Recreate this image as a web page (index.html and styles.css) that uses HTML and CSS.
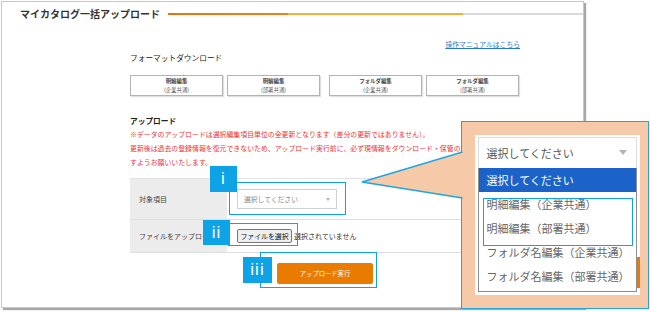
FILE: index.html
```html
<!DOCTYPE html>
<html lang="ja">
<head>
    <meta charset="UTF-8">
    <title>マイカタログ一括アップロード</title>
    <link rel="stylesheet" href="styles.css">
</head>
<body>

    <div class="window">
        <div class="page-head">
            <h1>マイカタログ一括アップロード</h1>
            <span class="head-line"></span>
        </div>

        <div class="content">
            <p class="manual"><a href="#">操作マニュアルはこちら</a></p>

            <h2>フォーマットダウンロード</h2>
            <div class="format-btns">
                <button class="fmt-btn"><b>明細編集</b><span>(企業共通)</span></button>
                <button class="fmt-btn"><b>明細編集</b><span>(部署共通)</span></button>
                <button class="fmt-btn fmt-folder"><b>フォルダ編集</b><span>(企業共通)</span></button>
                <button class="fmt-btn"><b>フォルダ編集</b><span>(部署共通)</span></button>
            </div>

            <h2 class="upload-title">アップロード</h2>
            <p class="notice">
                ※データのアップロードは選択編集項目単位の全更新となります（差分の更新ではありません）。<br>
                更新後は過去の登録情報を復元できないため、アップロード実行前に、必ず現情報をダウンロード・保管の上、アップロードを実施しま<br>
                すようお願いいたします。
            </p>

            <div class="upload-table">
                <div class="upload-row row-target">
                    <div class="row-label"><span>対象項目</span></div>
                    <div class="row-value">
                        <div class="select-box">選択してください<span class="caret"></span></div>
                    </div>
                </div>
                <div class="upload-row row-file">
                    <div class="row-label"><span class="label-clip">ファイルをアップロード</span></div>
                    <div class="row-value">
                        <button class="file-btn">ファイルを選択</button>
                        <span class="file-name">選択されていません</span>
                    </div>
                </div>
            </div>

            <div class="submit-row">
                <button class="btn-upload">アップロード実行</button>
            </div>
        </div>
    </div>

    <!-- annotations -->
    <div class="frame frame-1"></div>
    <div class="frame frame-2"></div>
    <div class="frame frame-3"></div>
    <div class="mark mark-1">i</div>
    <div class="mark mark-2">ii</div>
    <div class="mark mark-3">iii</div>

    <div class="callout">
        <div class="zoom-panel">
            <div class="zoom-select">選択してください<span class="zoom-caret"></span></div>
            <ul class="zoom-list">
                <li class="active">選択してください</li>
                <li>明細編集（企業共通）</li>
                <li>明細編集（部署共通）</li>
                <li>フォルダ名編集（企業共通）</li>
                <li>フォルダ名編集（部署共通）</li>
            </ul>
            <div class="frame frame-opts"></div>
            <span class="behind-btn"></span>
        </div>
    </div>

    <svg class="pointer" width="106" height="54" viewBox="0 0 106 54">
        <polygon points="2,34 104,4 104,50" fill="#f6caa8"/>
        <polyline points="102.5,4 2,34 102.5,50" fill="none" stroke="#1fa5e2" stroke-width="1.5"/>
    </svg>

</body>
</html>
```

FILE: styles.css
```css
:root {
    --blue-mark: #0ea2e6;
    --orange: #e87b00;
    --peach: #f6caa8;
    --red-text: #ec3535;
    --border-gray: #c8c8c8;
}

* { box-sizing: border-box; margin: 0; padding: 0; }

body {
    font-family: "Noto Sans CJK JP", "Noto Sans", sans-serif;
    color: #333;
    background: #fff;
    position: relative;
    width: 650px;
    height: 312px;
    overflow: hidden;
}

.window {
    margin: 1px 0 0 1px;
    width: 583px;
    height: 307px;
    border: 1px solid var(--border-gray);
    box-shadow: 2px 2px 1px #a8a8a8;
    background: #fff;
}

.page-head {
    display: flex;
    align-items: center;
    height: 24px;
    padding-left: 18px;
}

.page-head h1 {
    font-size: 10px;
    line-height: 12px;
    font-weight: 700;
    color: #333;
    white-space: nowrap;
}

.head-line {
    flex: 1;
    height: 2px;
    margin-left: 8px;
    background: linear-gradient(to right, #e8730c 0, #ec8418 29%, #f5ae3c 29%, #f5ae3c 71%, #dadada 71%);
}

.content {
    padding: 0 63px 0 128px;
}

.manual {
    margin-top: 13px;
    text-align: right;
    font-size: 6.8px;
    line-height: 10px;
}
.manual a {
    color: #2a78cc;
}

.content h2 {
    margin-top: 4px;
    font-size: 7.7px;
    line-height: 10px;
    font-weight: 400;
    color: #222;
}

.format-btns {
    display: flex;
    gap: 4px;
    margin-top: 12px;
}

.fmt-btn {
    width: 93px;
    height: 21px;
    display: flex;
    flex-direction: column;
    align-items: center;
    justify-content: center;
    background: #fff;
    border: 1px solid #b3b3b3;
    box-shadow: 1px 1px 1px rgba(0,0,0,0.12);
    font-family: inherit;
    font-size: 5.4px;
    line-height: 8.5px;
    color: #555;
}
.fmt-btn b { font-weight: 700; color: #444; }
.fmt-folder { margin-left: 5px; }

.content h2.upload-title {
    margin-top: 20px;
    font-weight: 700;
}

.notice {
    width: 333px;
    overflow: hidden;
    margin-top: 1px;
    font-size: 6.9px;
    line-height: 14px;
    color: var(--red-text);
    white-space: nowrap;
}

.upload-table {
    margin-top: 9px;
    border-top: 1px solid #e2e2e2;
}

.upload-row {
    display: grid;
    grid-template-columns: 97px 1fr;
    border-bottom: 1px solid #dedede;
}
.row-target { height: 41px; }
.row-file { height: 33px; }

.row-label {
    display: flex;
    align-items: center;
    padding-left: 9px;
    background: #ececec;
    font-size: 7px;
    color: #444;
    white-space: nowrap;
    overflow: hidden;
}
.label-clip {
    display: block;
    width: 64px;
    overflow: hidden;
}

.row-value {
    display: flex;
    align-items: center;
    padding-left: 10px;
    font-size: 7px;
}

.select-box {
    width: 100px;
    height: 20px;
    display: flex;
    align-items: center;
    justify-content: space-between;
    padding: 0 6px;
    border: 1px solid #cfcfcf;
    font-size: 6.8px;
    color: #888;
}
.caret {
    border-left: 2.5px solid transparent;
    border-right: 2.5px solid transparent;
    border-top: 3px solid #b0b0b0;
}

.file-btn {
    width: 55px;
    height: 14px;
    background: #efefef;
    border: 1px solid #767676;
    border-radius: 2px;
    font-family: inherit;
    font-size: 6.9px;
    color: #111;
}
.file-name {
    margin-left: 2px;
    color: #333;
}

.submit-row {
    display: flex;
    justify-content: center;
    margin-top: 10px;
}

.btn-upload {
    width: 96px;
    height: 21px;
    border: none;
    border-radius: 2px;
    background: var(--orange);
    color: #fff;
    font-family: inherit;
    font-size: 6.3px;
}

/* annotation overlays */
.frame {
    position: absolute;
    border: 1.5px solid var(--blue-mark);
}
.frame-1 { left: 229px; top: 182px; width: 117px; height: 33px; }
.frame-2 { left: 228px; top: 223px; width: 70px; height: 23px; }
.frame-3 { left: 260px; top: 252px; width: 117px; height: 36px; }

.mark {
    position: absolute;
    display: flex;
    align-items: center;
    justify-content: center;
    background: var(--blue-mark);
    color: #fff;
    font-family: "Liberation Sans", sans-serif;
    font-size: 17px;
    letter-spacing: 1px;
}
.mark-1 { left: 210px; top: 166px; width: 27px; height: 26px; }
.mark-2 { left: 203px; top: 220px; width: 27px; height: 25px; }
.mark-3 { left: 243px; top: 257px; width: 29px; height: 26px; }

.callout {
    position: absolute;
    left: 461px;
    top: 121px;
    width: 188px;
    height: 188px;
    border: 1.5px solid #1fa5e2;
    background: var(--peach);
}

.pointer {
    position: absolute;
    left: 360px;
    top: 148px;
}

.zoom-panel {
    position: absolute;
    left: 12.5px;
    top: 12.5px;
    width: 165px;
    height: 160px;
    background: #fff;
}

.zoom-select {
    height: 31px;
    margin: 2px 3px 0;
    display: flex;
    align-items: center;
    justify-content: space-between;
    padding: 0 9px 0 8px;
    border: 1px solid #dcdcdc;
    border-bottom: none;
    font-size: 11px;
    color: #555;
}
.zoom-caret {
    border-left: 4px solid transparent;
    border-right: 4px solid transparent;
    border-top: 5px solid #b3b3b3;
}

.zoom-list {
    list-style: none;
    margin: 0 3px;
    padding-bottom: 3px;
    border: 1px solid #8c8c8c;
    border-top: none;
}
.zoom-list li {
    height: 24px;
    display: flex;
    align-items: center;
    padding-left: 8px;
    font-size: 11px;
    color: #666;
    white-space: nowrap;
}
.zoom-list li.active {
    background: #1c63c9;
    color: #fff;
}

.frame-opts { left: 8px; top: 63px; width: 150px; height: 48px; }

.behind-btn {
    position: absolute;
    left: 162px;
    top: 122px;
    width: 3px;
    height: 31px;
    background: var(--orange);
}
```
